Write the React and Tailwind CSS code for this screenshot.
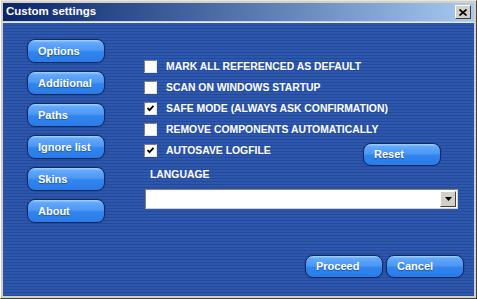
import React from 'react'

const font = { fontFamily: '"Liberation Sans", Arial, sans-serif' }

function BlueButton({ children, className = '' }) {
  return (
    <button
      className={`flex h-[23px] w-[78px] items-center rounded-[8px] border border-[#0d2b6b] bg-[linear-gradient(to_bottom,#a9d2ff_0%,#62a8fc_12%,#4c98f6_45%,#3184ee_55%,#2b7be6_100%)] pl-[10px] text-[11px] font-bold text-white shadow-[0_0_0_1px_rgba(40,70,140,0.6)] [text-shadow:0_1px_1px_rgba(0,0,0,0.35)] ${className}`}
    >
      {children}
    </button>
  )
}

function Check({ checked }) {
  return (
    <span className="flex h-[13px] w-[13px] items-center justify-center border border-t-[#808080] border-l-[#808080] border-b-[#e8e6e0] border-r-[#e8e6e0] bg-white">
      {checked && (
        <svg width="9" height="9" viewBox="0 0 9 9">
          <path d="M1.5 4 L3.5 6.2 L7.5 1.8" fill="none" stroke="#000" strokeWidth="1.8" />
        </svg>
      )}
    </span>
  )
}

function OptionRow({ label, checked }) {
  return (
    <div className="flex h-[21px] items-center">
      <Check checked={checked} />
      <span className="ml-[9px] text-[10.4px] font-bold text-white">{label}</span>
    </div>
  )
}

export default function App() {
  const nav = ['Options', 'Additional', 'Paths', 'Ignore list', 'Skins', 'About']
  return (
    <div style={font} className="flex h-[299px] w-[477px] flex-col border-t border-l border-t-[#e8e6e0] border-l-white border-r border-b border-r-[#404040] border-b-[#404040] bg-[#d4d0c8] p-[2px]">
      <div className="flex h-[18px] items-center justify-between bg-linear-to-r from-[#0a246a] to-[#a6caf0] pl-[3px] pr-[3px]">
        <span className="text-[11.5px] font-bold text-white">Custom settings</span>
        <span className="flex h-[14px] w-[16px] items-center justify-center border border-t-white border-l-white border-r-[#404040] border-b-[#404040] bg-[#d4d0c8]">
          <svg width="8" height="7" viewBox="0 0 8 7">
            <path d="M0.5 0.5 L7.5 6.5 M7.5 0.5 L0.5 6.5" stroke="#000" strokeWidth="1.6" />
          </svg>
        </span>
      </div>
      <div className="mt-px flex flex-1 flex-col border-t border-t-[#dfe8f5] bg-[repeating-linear-gradient(to_bottom,#2d57ac_0px,#2d57ac_2px,#234a9b_2px,#234a9b_3px)]">
        <div className="flex">
          <div className="flex flex-col gap-[8px] pl-[24px] pt-[16px]">
            {nav.map((n) => (
              <BlueButton key={n} className="h-[24px]">{n}</BlueButton>
            ))}
          </div>
          <div className="ml-[39px] flex w-[314px] flex-col pt-[33px]">
            <OptionRow label="MARK ALL REFERENCED AS DEFAULT" />
            <OptionRow label="SCAN ON WINDOWS STARTUP" />
            <OptionRow label="SAFE MODE (ALWAYS ASK CONFIRMATION)" checked />
            <OptionRow label="REMOVE COMPONENTS AUTOMATICALLY" />
            <div className="flex items-start justify-between">
              <OptionRow label="AUTOSAVE LOGFILE" checked />
              <BlueButton className="mr-[17px] mt-[3px]">Reset</BlueButton>
            </div>
            <div className="mt-[3px] flex h-[12px] items-center pl-[6px] text-[10.4px] font-bold text-white">
              LANGUAGE
            </div>
            <div className="ml-px mt-[8px] flex h-[20px] w-[313px] items-center justify-end border border-t-[#808080] border-l-[#808080] border-b-[#d4d0c8] border-r-[#d4d0c8] bg-white pr-px">
              <span className="flex h-[16px] w-[16px] items-center justify-center border border-t-white border-l-white border-r-[#404040] border-b-[#404040] bg-[#d4d0c8]">
                <svg width="7" height="4" viewBox="0 0 7 4">
                  <path d="M0 0 H7 L3.5 4 Z" fill="#000" />
                </svg>
              </span>
            </div>
          </div>
        </div>
        <div className="mt-auto flex justify-end gap-[3px] pb-[18px] pr-[10px]">
          <BlueButton className="w-[77px]">Proceed</BlueButton>
          <BlueButton className="w-[77px]">Cancel</BlueButton>
        </div>
      </div>
    </div>
  )
}
